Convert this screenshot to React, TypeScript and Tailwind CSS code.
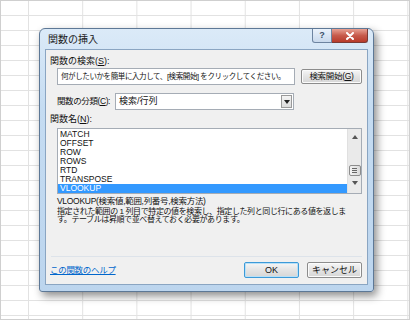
import React from "react";

const items = ["MATCH", "OFFSET", "ROW", "ROWS", "RTD", "TRANSPOSE", "VLOOKUP"];

const font = "font-['Liberation_Sans','Noto_Sans_CJK_JP',sans-serif]";

const WinButton = ({ label, focused }: { label: string; focused?: boolean }) => (
  <div
    className={`flex items-center justify-center w-[55px] h-[16px] rounded-[2px] border text-[9px] text-[#111] bg-[linear-gradient(to_bottom,#f6f6f6,#e4e4e4_50%,#d6d6d6)] ${
      focused ? "border-[#3c9ad8] shadow-[inset_0_0_0_1px_#b9e0f7]" : "border-[#8c8c8c] shadow-[inset_0_0_0_1px_#fbfbfb]"
    }`}
  >
    {label}
  </div>
);

export default function App() {
  return (
    <div
      className={`w-[410px] h-[320px] overflow-hidden border border-[#cfcfcf] bg-white bg-[linear-gradient(to_right,#e2e2e2_1px,transparent_1px),linear-gradient(to_bottom,#e2e2e2_1px,transparent_1px)] bg-[size:54.2px_15px] bg-[position:27px_14px] pl-[38px] pt-[27px] ${font}`}
    >
      {/* dialog window */}
      <div className="relative w-[335px] h-[264px] rounded-t-[6px] rounded-b-[3px] border border-[#5d7896] bg-[linear-gradient(to_bottom,#dbeaf8,#c5dcf2_30%,#bcd5ee)] shadow-[3px_4px_8px_rgba(0,0,0,0.45)] px-[5px] pb-[6px] flex flex-col">
        {/* title bar */}
        <div className="h-[20px] flex items-center pl-[3px] text-[10px] text-[#1a1a1a] shrink-0">
          関数の挿入
        </div>
        <div className="absolute top-0 right-[5px] flex">
          <div className="w-[20px] h-[14px] rounded-bl-[3px] border border-t-0 border-[#6d84a0] bg-[linear-gradient(to_bottom,#eaf2fb,#c9d9ec)] flex items-center justify-center text-[9px] font-bold text-[#3b4f68]">
            ?
          </div>
          <div className="w-[36px] h-[14px] rounded-br-[3px] border border-t-0 border-l-0 border-[#7a3a35] bg-[linear-gradient(to_bottom,#e8a193,#c75b4c_50%,#b83a2a)] flex items-center justify-center">
            <svg width="10" height="8" viewBox="0 0 10 8">
              <path d="M2 1 L8 7 M8 1 L2 7" stroke="#fff" strokeWidth="2" strokeLinecap="round" />
            </svg>
          </div>
        </div>

        {/* client area */}
        <div className="flex-1 border border-[#8aa5c2] bg-[#f0f0f0] flex flex-col text-[#111] text-[9px] leading-none px-[4px]">
          <div className="mt-[6px] h-[10px] flex items-center whitespace-nowrap">
            関数の検索(<span className="underline">S</span>):
          </div>
          <div className="flex mt-[2px] pl-[7px] items-start">
            <div className="w-[238px] h-[17px] border border-[#a5acb5] bg-white flex items-center px-[3px] text-[7.5px] tracking-[-0.4px] whitespace-nowrap overflow-hidden">
              何がしたいかを簡単に入力して、[検索開始] をクリックしてください。
            </div>
            <div className="ml-[6px] mt-[1px] w-[61px] h-[15px] rounded-[2px] border border-[#8c8c8c] bg-[linear-gradient(to_bottom,#f6f6f6,#e4e4e4_50%,#d6d6d6)] shadow-[inset_0_0_0_1px_#fbfbfb] flex items-center justify-center text-[8.5px] tracking-[-0.3px] whitespace-nowrap">
              検索開始(<span className="underline">G</span>)
            </div>
          </div>
          <div className="flex items-center mt-[8px] pl-[7px]">
            <div className="w-[58px] whitespace-nowrap text-[8.5px] tracking-[-0.4px]">
              関数の分類(<span className="underline">C</span>):
            </div>
            <div className="w-[179px] h-[17px] border border-[#a5acb5] bg-white flex items-center pl-[3px]">
              <span className="flex-1">検索/行列</span>
              <div className="w-[11px] h-[13px] mr-[1px] border border-[#9a9a9a] bg-[linear-gradient(to_bottom,#f4f4f4,#dcdcdc)] flex items-center justify-center">
                <svg width="6" height="4" viewBox="0 0 6 4">
                  <path d="M0 0 H6 L3 4 Z" fill="#222" />
                </svg>
              </div>
            </div>
          </div>
          <div className="mt-[4px] h-[10px] flex items-center whitespace-nowrap">
            関数名(<span className="underline">N</span>):
          </div>
          <div className="ml-[7px] mt-[4px] w-[305px] h-[66px] border border-[#a5acb5] bg-white flex">
            <div className="flex-1 pt-[1px] flex flex-col">
              {items.map((it) => (
                <div
                  key={it}
                  className={`h-[9px] flex items-center pl-[2px] text-[8.5px] ${
                    it === "VLOOKUP" ? "bg-[#3399ff] text-white" : ""
                  }`}
                >
                  {it}
                </div>
              ))}
            </div>
            <div className="w-[14px] bg-[#eaeaea] border-l border-[#e0e0e0] flex flex-col items-center">
              <svg width="6" height="4" viewBox="0 0 6 4" className="mt-[6px]">
                <path d="M0 4 H6 L3 0 Z" fill="#555" />
              </svg>
              <div className="mt-[26px] w-[12px] h-[11px] rounded-[2px] border border-[#8d8d8d] bg-[linear-gradient(to_right,#f3f3f3,#dadada)] flex flex-col items-center justify-center gap-[1px]">
                <div className="w-[5px] h-px bg-[#666]" />
                <div className="w-[5px] h-px bg-[#666]" />
                <div className="w-[5px] h-px bg-[#666]" />
              </div>
              <svg width="6" height="4" viewBox="0 0 6 4" className="mt-[5px]">
                <path d="M0 0 H6 L3 4 Z" fill="#555" />
              </svg>
            </div>
          </div>
          <div className="ml-[7px] mt-[2px] h-[10px] flex items-center text-[8.5px] tracking-[-0.3px] whitespace-nowrap">
            VLOOKUP(検索値,範囲,列番号,検索方法)
          </div>
          <div className="ml-[7px] mt-[2px] text-[8px] leading-[8px] tracking-[-0.4px] whitespace-nowrap">
            指定された範囲の 1 列目で特定の値を検索し、指定した列と同じ行にある値を返しま
            <br />
            す。テーブルは昇順で並べ替えておく必要があります。
          </div>
          <div className="flex-1" />
          <div className="h-px bg-[#dde3ea] mx-[1px]" />
          <div className="flex items-center h-[27px] pb-[1px]">
            <span className="text-[#0066cc] underline text-[8.5px] tracking-[-0.3px] whitespace-nowrap">この関数のヘルプ</span>
            <div className="flex-1" />
            <WinButton label="OK" focused />
            <div className="w-[8px]" />
            <WinButton label="キャンセル" />
            <div className="w-[1px]" />
          </div>
        </div>
      </div>
    </div>
  );
}
